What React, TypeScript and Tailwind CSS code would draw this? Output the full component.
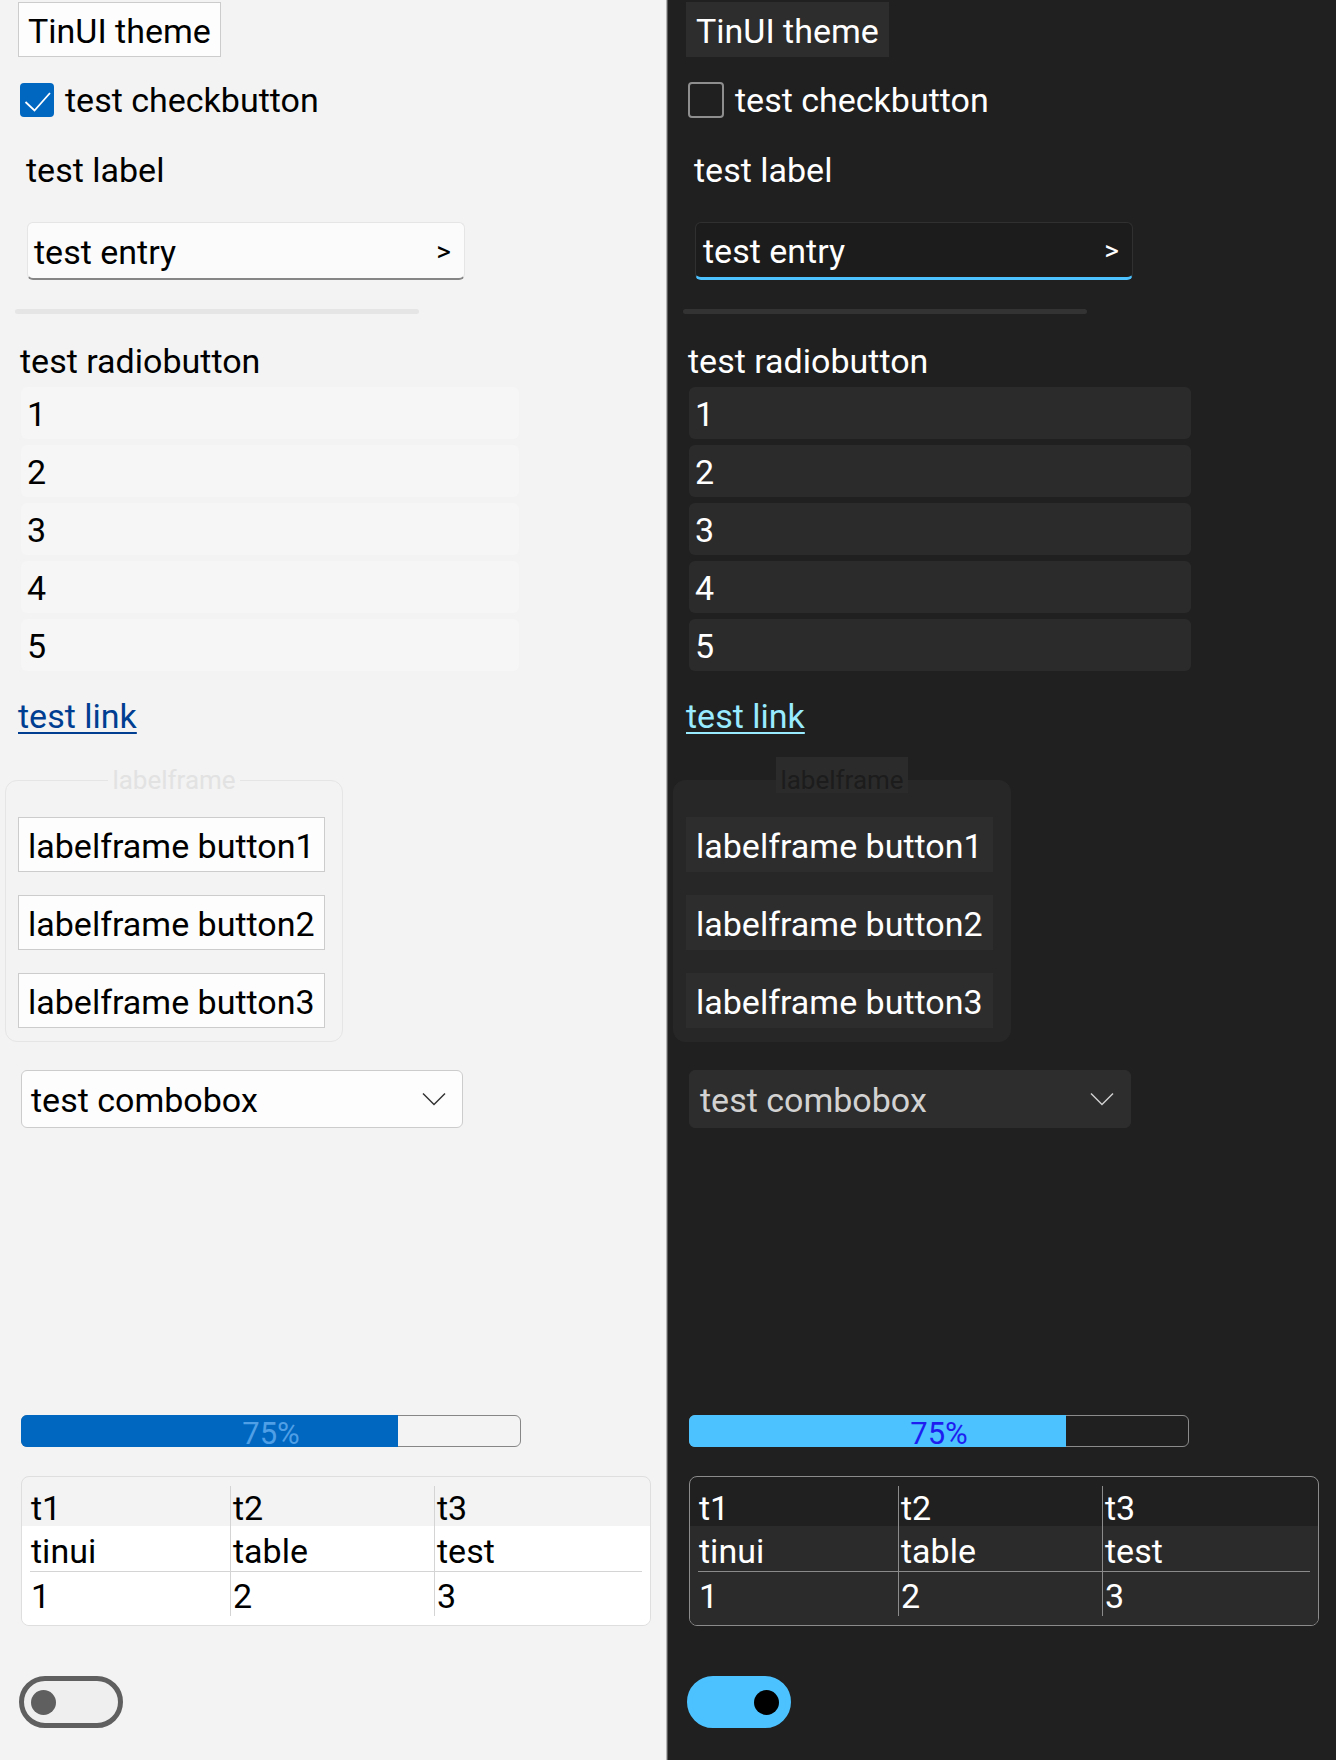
import React from "react";

const rows = ["1", "2", "3", "4", "5"];
const frameButtons = ["labelframe button1", "labelframe button2", "labelframe button3"];

function Panel({ dark }: { dark: boolean }) {
  // shared pieces, light / dark variants
  const btn = dark
    ? "h-[55px] flex items-center px-[9px] pt-[2px] bg-[#2d2d2d] border border-[#2d2d2d] text-white"
    : "h-[55px] flex items-center px-[9px] pt-[2px] bg-[#fdfdfd] border border-[#cccccc] text-black";

  return (
    <div
      className={
        dark
          ? "w-[669px] min-h-[1760px] flex flex-col items-start bg-[#202020] border-l border-l-[#5a5a5a] text-white"
          : "w-[667px] min-h-[1760px] flex flex-col items-start bg-[#f3f3f3] border-r border-r-[#b4b4b4] text-black"
      }
    >
      {/* theme button */}
      <div className={"mt-[2px] ml-[18px] " + btn}>TinUI theme</div>

      {/* checkbutton */}
      <div className="mt-[26px] ml-[20px] h-[34px] flex items-center gap-[11px]">
        {dark ? (
          <div className="w-[36px] h-[36px] rounded-[4px] border-2 border-[#8e8e8e]" />
        ) : (
          <div className="w-[34px] h-[34px] rounded-[4px] bg-[#0067c0] flex items-center justify-center">
            <svg width="34" height="34" viewBox="0 0 34 34">
              <polyline points="5.5,19 14.5,27.5 30,10" fill="none" stroke="#ffffff" strokeWidth="1.8" />
            </svg>
          </div>
        )}
        <span>test checkbutton</span>
      </div>

      {/* label */}
      <div className="mt-[36px] ml-[26px] h-[34px]">test label</div>

      {/* entry */}
      <div
        className={
          dark
            ? "mt-[35px] ml-[27px] w-[438px] h-[58px] flex items-center justify-between pl-[7px] pr-[13px] pt-[2px] rounded-[6px] border border-[#303030] border-b-[3px] border-b-[#4cc2ff] bg-[#1c1c1c]"
            : "mt-[35px] ml-[27px] w-[438px] h-[58px] flex items-center justify-between pl-[6px] pr-[13px] pt-[2px] rounded-[6px] border border-[#e5e5e5] border-b-2 border-b-[#868686] bg-[#fbfbfb]"
        }
      >
        <span>test entry</span>
        <span className="text-[28px]">&gt;</span>
      </div>

      {/* separator */}
      <div
        className={
          dark
            ? "mt-[29px] ml-[15px] w-[404px] h-[5px] rounded-full bg-[#333333]"
            : "mt-[29px] ml-[15px] w-[404px] h-[5px] rounded-full bg-[#e5e5e5]"
        }
      />

      {/* radiobutton */}
      <div className="mt-[30px] ml-[20px] h-[34px]">test radiobutton</div>
      <div className="mt-[9px] ml-[21px] flex flex-col gap-[6px]">
        {rows.map((r) => (
          <div
            key={r}
            className={
              dark
                ? "w-[502px] h-[52px] flex items-center pl-[6px] pt-[2px] rounded-[6px] bg-[#2b2b2b]"
                : "w-[498px] h-[52px] flex items-center pl-[6px] pt-[2px] rounded-[6px] bg-[#f6f6f6]"
            }
          >
            {r}
          </div>
        ))}
      </div>

      {/* link */}
      <div
        className={
          dark
            ? "mt-[28px] ml-[18px] h-[34px] underline decoration-2 underline-offset-[4px] text-[#99ebff]"
            : "mt-[28px] ml-[18px] h-[34px] underline decoration-2 underline-offset-[4px] text-[#003e92]"
        }
      >
        test link
      </div>

      {/* labelframe */}
      <div className="mt-[24px] ml-[5px] w-[338px] flex flex-col items-center">
        <div
          className={
            dark
              ? "relative z-10 -mb-[13px] pt-[10px] px-[4px] h-[36px] text-[26px] leading-[26px] bg-[#2b2b2b] text-[#1c1c1c]"
              : "relative z-10 -mb-[13px] pt-[10px] px-[4px] h-[36px] text-[26px] leading-[26px] bg-[#f3f3f3] text-[#e2e2e2]"
          }
        >
          labelframe
        </div>
        <div
          className={
            dark
              ? "w-full flex flex-col items-start gap-[23px] pt-[36px] pb-[13px] pl-[12px] rounded-[12px] border border-[#272727] bg-[#272727]"
              : "w-full flex flex-col items-start gap-[23px] pt-[36px] pb-[13px] pl-[12px] rounded-[12px] border border-[#e5e5e5]"
          }
        >
          {frameButtons.map((b) => (
            <div key={b} className={btn}>
              {b}
            </div>
          ))}
        </div>
      </div>

      {/* combobox */}
      <div
        className={
          dark
            ? "mt-[28px] ml-[21px] w-[442px] h-[58px] flex items-center justify-between pl-[10px] pr-[16px] pt-[2px] rounded-[6px] border border-[#2d2d2d] bg-[#2d2d2d] text-[#d2d2d2]"
            : "mt-[28px] ml-[21px] w-[442px] h-[58px] flex items-center justify-between pl-[9px] pr-[16px] pt-[2px] rounded-[6px] border border-[#cccccc] bg-[#fdfdfd]"
        }
      >
        <span>test combobox</span>
        <svg width="24" height="14" viewBox="0 0 24 14" className="-mt-[2px]">
          <polyline points="1,1.5 12,12.5 23,1.5" fill="none" stroke={dark ? "#cfcfcf" : "#333333"} strokeWidth="1.5" />
        </svg>
      </div>

      {/* progressbar */}
      <div className="mt-[287px] ml-[21px] relative w-[500px] h-[32px]">
        <div
          className={
            dark
              ? "absolute inset-0 rounded-[6px] border border-[#8b8b8b]"
              : "absolute inset-0 rounded-[6px] border border-[#868686]"
          }
        />
        <div
          className={
            dark
              ? "absolute left-0 top-0 bottom-0 w-[75.3%] rounded-l-[6px] bg-[#4cc2ff]"
              : "absolute left-0 top-0 bottom-0 w-[75.3%] rounded-l-[6px] bg-[#0067c0]"
          }
        />
        <div
          className={
            dark
              ? "absolute inset-0 flex items-center justify-center pt-[5px] text-[31px] leading-[31px] text-[#1e1ef0]"
              : "absolute inset-0 flex items-center justify-center pt-[5px] text-[31px] leading-[31px] text-[#4f9fe6]"
          }
        >
          75%
        </div>
      </div>

      {/* table */}
      <div
        className={
          dark
            ? "mt-[29px] ml-[21px] w-[630px] rounded-[8px] border border-[#8b8b8b] overflow-hidden"
            : "mt-[29px] ml-[21px] w-[630px] rounded-[8px] border border-[#dedede] overflow-hidden"
        }
      >
        <div className="px-[8px] pt-[9px]">
          <Row cells={["t1", "t2", "t3"]} dark={dark} h="h-[40px]" />
        </div>
        <div className={dark ? "px-[8px] pb-[9px] bg-[#2b2b2b]" : "px-[8px] pb-[9px] bg-white"}>
          <Row cells={["tinui", "table", "test"]} dark={dark} h="h-[46px]" line />
          <Row cells={["1", "2", "3"]} dark={dark} h="h-[44px]" />
        </div>
      </div>

      {/* toggle */}
      {dark ? (
        <div className="mt-[50px] ml-[19px] w-[104px] h-[52px] flex items-center justify-end pr-[7px] rounded-full border-[5px] border-[#4cc2ff] bg-[#4cc2ff]">
          <div className="w-[25px] h-[25px] rounded-full bg-black" />
        </div>
      ) : (
        <div className="mt-[50px] ml-[19px] w-[104px] h-[52px] flex items-center pl-[7px] rounded-full border-[5px] border-[#5f5f5f] bg-[#efefef]">
          <div className="w-[25px] h-[25px] rounded-full bg-[#5f5f5f]" />
        </div>
      )}
    </div>
  );
}

function Row({ cells, dark, h, line }: { cells: string[]; dark: boolean; h: string; line?: boolean }) {
  const lineCls = dark ? "border-[#8b8b8b]" : "border-[#d4d4d4]";
  return (
    <div className={"grid grid-cols-[200px_204px_1fr] " + h}>
      {cells.map((c, i) => (
        <div
          key={c}
          className={
            "flex items-center pt-[4px] " +
            lineCls +
            (i > 0 ? " border-l pl-[2px]" : " pl-[1px]") +
            (line ? " border-b" : "")
          }
        >
          {c}
        </div>
      ))}
    </div>
  );
}

export default function App() {
  return (
    <div className="flex w-[1336px] min-h-[1760px] font-['Roboto',sans-serif] text-[34px] leading-[34px]">
      <Panel dark={false} />
      <Panel dark={true} />
    </div>
  );
}
